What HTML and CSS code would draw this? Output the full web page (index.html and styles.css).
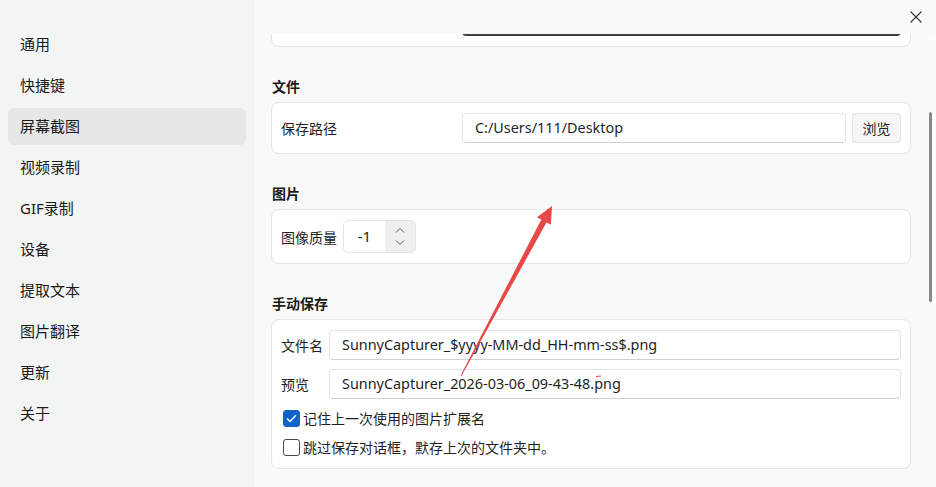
FILE: index.html
```html
<!DOCTYPE html>
<html lang="zh-CN">
<head>
<meta charset="UTF-8">
<title>设置</title>
<link rel="stylesheet" href="styles.css">
</head>
<body>
    <div class="app">
        <aside class="sidebar">
            <ul class="nav">
                <li>通用</li>
                <li>快捷键</li>
                <li class="active">屏幕截图</li>
                <li>视频录制</li>
                <li>GIF录制</li>
                <li>设备</li>
                <li>提取文本</li>
                <li>图片翻译</li>
                <li>更新</li>
                <li>关于</li>
            </ul>
        </aside>
        <main class="main">
            <div class="titlebar">
                <button class="close" title="关闭">
                    <svg width="12" height="12" viewBox="0 0 12 12"><path d="M0.5 0.5L11.5 11.5M11.5 0.5L0.5 11.5" stroke="#333" stroke-width="1.1" fill="none"/></svg>
                </button>
            </div>
            <div class="viewport">
                <div class="content">
                    <div class="card card-first">
                        <div class="row">
                            <span class="label label-wide"></span>
                            <div class="field field-focus"></div>
                        </div>
                    </div>

                    <h3 class="heading">文件</h3>
                    <div class="card">
                        <div class="row">
                            <span class="label label-wide">保存路径</span>
                            <div class="field">C:/Users/111/Desktop</div>
                            <button class="btn">浏览</button>
                        </div>
                    </div>

                    <h3 class="heading">图片</h3>
                    <div class="card">
                        <div class="row">
                            <span class="label">图像质量</span>
                            <div class="spin">
                                <span class="spin-value">-1</span>
                                <span class="spin-arrows">
                                    <svg width="10" height="6" viewBox="0 0 10 6"><path d="M1 5.5L5 1.5L9 5.5" stroke="#555" stroke-width="1" fill="none"/></svg>
                                    <svg width="10" height="6" viewBox="0 0 10 6"><path d="M1 0.5L5 4.5L9 0.5" stroke="#555" stroke-width="1" fill="none"/></svg>
                                </span>
                            </div>
                        </div>
                    </div>

                    <h3 class="heading">手动保存</h3>
                    <div class="card card-save">
                        <div class="row">
                            <span class="label label-short">文件名</span>
                            <div class="field">SunnyCapturer_$yyyy-MM-dd_HH-mm-ss$.png</div>
                        </div>
                        <div class="row">
                            <span class="label label-short">预览</span>
                            <div class="field">SunnyCapturer_2026-03-06_09-43-48.png</div>
                        </div>
                        <label class="check">
                            <span class="box checked">
                                <svg width="11" height="9" viewBox="0 0 11 9"><path d="M1 4.6L4 7.5L10 1.2" stroke="#fff" stroke-width="1.4" fill="none"/></svg>
                            </span>
                            记住上一次使用的图片扩展名
                        </label>
                        <label class="check">
                            <span class="box"></span>
                            跳过保存对话框，默存上次的文件夹中。
                        </label>
                    </div>
                </div>
                <div class="scrollbar"><div class="thumb"></div></div>
            </div>
        </main>
    </div>

    <svg class="annotation" width="936" height="487" viewBox="0 0 936 487">
        <polygon fill="#e94848" points="460.6,375.4 541.3,219.6 536.9,217.2 552,206 550.9,224.8 546.5,222.4 461.6,375.8"/>
        <path d="M596 376.5L601 376" stroke="#e94848" stroke-width="1" fill="none"/>
    </svg>
</body>
</html>
```

FILE: styles.css
```css
* {
    margin: 0;
    padding: 0;
    box-sizing: border-box;
}
html, body {
    width: 936px;
    height: 487px;
    overflow: hidden;
}
body {
    font-family: "Noto Sans", "Noto Sans CJK SC", sans-serif;
    font-size: 14px;
    color: #1b1b1b;
    background: #f9f9f9;
    position: relative;
}
.app {
    display: flex;
    height: 487px;
}

/* sidebar */
.sidebar {
    width: 255px;
    flex: none;
    background: #f3f4f4;
    padding: 26px 9px 0 8px;
}
.nav {
    list-style: none;
    display: flex;
    flex-direction: column;
    gap: 4px;
}
.nav li {
    height: 37px;
    line-height: 37px;
    padding-left: 12px;
    font-size: 15px;
    border-radius: 6px;
    color: #1a1a1a;
}
.nav li.active {
    background: #e6e7e7;
}

/* main */
.main {
    flex: 1;
    display: flex;
    flex-direction: column;
    min-width: 0;
}
.titlebar {
    height: 34px;
    flex: none;
    display: flex;
    justify-content: flex-end;
    align-items: center;
    padding-right: 13px;
    position: relative;
    z-index: 2;
    background: #f9f9f9;
}
.close {
    border: 0;
    background: none;
    width: 14px;
    height: 14px;
    display: flex;
    align-items: center;
    justify-content: center;
}
.viewport {
    flex: 1;
    position: relative;
    overflow: hidden;
}
.content {
    margin-top: -39px;
    padding: 0 25px 0 16px;
}
.scrollbar {
    position: absolute;
    top: 0;
    right: 0;
    width: 9px;
    height: 100%;
    background: #fbfbfb;
}
.thumb {
    position: absolute;
    left: 2px;
    top: 78px;
    width: 3px;
    height: 190px;
    border-radius: 2px;
    background: #878787;
}

.heading {
    font-size: 14px;
    font-weight: 700;
    line-height: 20px;
    margin: 30px 0 5px 1px;
    color: #1a1a1a;
}
.card {
    background: #fff;
    border: 1px solid #e6e6e6;
    border-radius: 8px;
    padding: 10px 9px;
}
.row {
    display: flex;
    align-items: center;
    gap: 6px;
}
.label {
    flex: none;
    color: #222;
}
.label-wide {
    width: 175px;
}
.label-short {
    width: 42px;
}
.field {
    flex: 1;
    height: 30px;
    line-height: 28px;
    border: 1px solid #e3e3e3;
    border-bottom-color: #d2d2d2;
    border-radius: 4px;
    padding: 0 12px;
    font-size: 14.4px;
    color: #1f1f1f;
    white-space: nowrap;
    overflow: hidden;
}
.field-focus {
    border-bottom: 2px solid #3f3f3f;
}
.btn {
    flex: none;
    width: 49px;
    height: 30px;
    border: 1px solid #e3e3e3;
    border-radius: 4px;
    background: #f6f6f6;
    font-family: inherit;
    font-size: 14px;
    color: #222;
}

.spin {
    display: flex;
    width: 73px;
    height: 33px;
    border: 1px solid #e3e3e3;
    border-radius: 5px;
    overflow: hidden;
}
.spin-value {
    flex: 1;
    text-align: center;
    line-height: 31px;
    font-size: 15px;
}
.spin-arrows {
    width: 30px;
    background: #efefef;
    display: flex;
    flex-direction: column;
    align-items: center;
    justify-content: center;
    gap: 7px;
}

.card-save {
    display: flex;
    flex-direction: column;
    gap: 9px;
    padding-bottom: 11px;
}
.check {
    display: flex;
    align-items: center;
    gap: 3px;
    height: 20px;
    padding-left: 2px;
    color: #1f1f1f;
}
.box {
    width: 17px;
    height: 17px;
    border: 1.5px solid #4a4a4a;
    border-radius: 3px;
    display: flex;
    align-items: center;
    justify-content: center;
}
.box.checked {
    background: #0f62c6;
    border-color: #0f62c6;
}

.annotation {
    position: absolute;
    top: 0;
    left: 0;
    pointer-events: none;
}
```
